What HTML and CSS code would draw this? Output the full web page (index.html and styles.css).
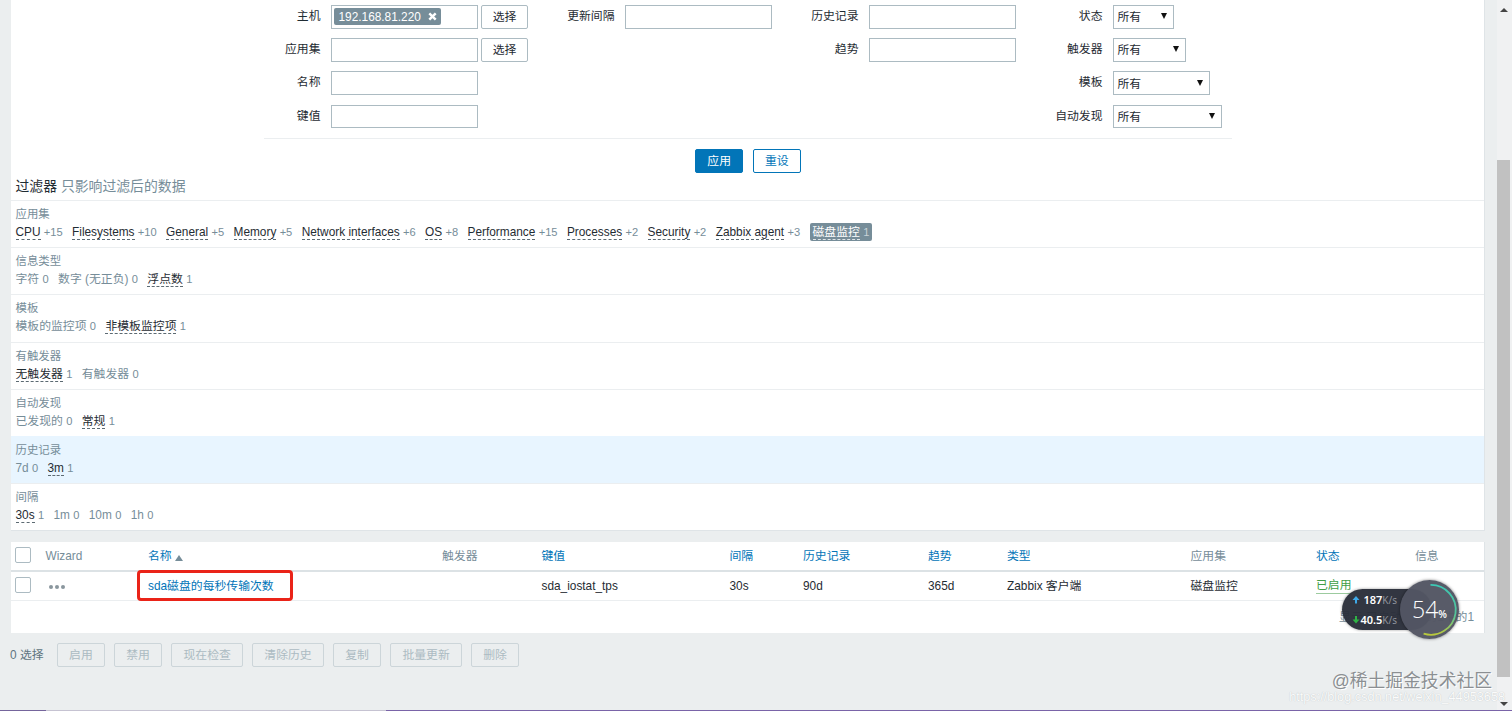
FILE: index.html
```
<!DOCTYPE html>
<html lang="zh-CN">
<head>
    <meta charset="UTF-8">
    <title>监控项的配置</title>
    <link rel="stylesheet" href="styles.css">
</head>
<body>
    <main>
        <section class="filter">
            <form class="filter-form">
                <div class="filter-cols">
                    <div class="col col-first">
                        <div class="row"><label>主机</label><div class="field"><span class="tag">192.168.81.220<svg width="9" height="9" viewBox="0 0 9 9"><path d="M1.3 1.3L7.7 7.7M7.7 1.3L1.3 7.7" stroke="#fff" stroke-width="2.4"/></svg></span></div><button type="button" class="btn btn-grey">选择</button></div>
                        <div class="row"><label>应用集</label><div class="field"></div><button type="button" class="btn btn-grey">选择</button></div>
                        <div class="row"><label>名称</label><div class="field"></div></div>
                        <div class="row"><label>键值</label><div class="field"></div></div>
                    </div>
                    <div class="col">
                        <div class="row"><label>更新间隔</label><div class="field"></div></div>
                    </div>
                    <div class="col">
                        <div class="row"><label>历史记录</label><div class="field"></div></div>
                        <div class="row"><label>趋势</label><div class="field"></div></div>
                    </div>
                    <div class="col">
                        <div class="row"><label>状态</label><div class="select w-status">所有<i></i></div></div>
                        <div class="row"><label>触发器</label><div class="select w-trigger">所有<i></i></div></div>
                        <div class="row"><label>模板</label><div class="select w-template">所有<i></i></div></div>
                        <div class="row"><label>自动发现</label><div class="select w-discovery">所有<i></i></div></div>
                    </div>
                </div>
                <div class="filter-buttons">
                    <button type="button" class="btn btn-main">应用</button>
                    <button type="button" class="btn btn-alt">重设</button>
                </div>
            </form>

            <h4>过滤器 <span>只影响过滤后的数据</span></h4>
            <div class="sub">
                <h3>应用集</h3>
                <p><span><a>CPU</a> <sup>+15</sup></span><span><a>Filesystems</a> <sup>+10</sup></span><span><a>General</a> <sup>+5</sup></span><span><a>Memory</a> <sup>+5</sup></span><span><a>Network interfaces</a> <sup>+6</sup></span><span><a>OS</a> <sup>+8</sup></span><span><a>Performance</a> <sup>+15</sup></span><span><a>Processes</a> <sup>+2</sup></span><span><a>Security</a> <sup>+2</sup></span><span><a>Zabbix agent</a> <sup>+3</sup></span><span class="enabled"><a>磁盘监控</a> <sup>1</sup></span></p>
            </div>
            <div class="sub">
                <h3>信息类型</h3>
                <p><span>字符 <sup>0</sup></span><span>数字 (无正负) <sup>0</sup></span><span><a>浮点数</a> <sup>1</sup></span></p>
            </div>
            <div class="sub">
                <h3>模板</h3>
                <p><span>模板的监控项 <sup>0</sup></span><span><a>非模板监控项</a> <sup>1</sup></span></p>
            </div>
            <div class="sub">
                <h3>有触发器</h3>
                <p><span><a>无触发器</a> <sup>1</sup></span><span>有触发器 <sup>0</sup></span></p>
            </div>
            <div class="sub">
                <h3>自动发现</h3>
                <p><span>已发现的 <sup>0</sup></span><span><a>常规</a> <sup>1</sup></span></p>
            </div>
            <div class="sub hover">
                <h3>历史记录</h3>
                <p><span>7d <sup>0</sup></span><span><a>3m</a> <sup>1</sup></span></p>
            </div>
            <div class="sub">
                <h3>间隔</h3>
                <p><span><a>30s</a> <sup>1</sup></span><span>1m <sup>0</sup></span><span>10m <sup>0</sup></span><span>1h <sup>0</sup></span></p>
            </div>
        </section>

        <table class="list">
            <colgroup>
                <col class="c-check"><col class="c-wizard"><col class="c-name"><col class="c-trig"><col class="c-key"><col class="c-int">
                <col class="c-hist"><col class="c-trend"><col class="c-type"><col class="c-app"><col class="c-status"><col class="c-info">
            </colgroup>
            <thead>
                <tr>
                    <th><span class="check"></span></th>
                    <th>Wizard</th>
                    <th><a>名称</a><i class="sort"></i></th>
                    <th>触发器</th>
                    <th><a>键值</a></th>
                    <th><a>间隔</a></th>
                    <th><a>历史记录</a></th>
                    <th><a>趋势</a></th>
                    <th><a>类型</a></th>
                    <th>应用集</th>
                    <th><a>状态</a></th>
                    <th>信息</th>
                </tr>
            </thead>
            <tbody>
                <tr>
                    <td><span class="check"></span></td>
                    <td><span class="dots"><i></i><i></i><i></i></span></td>
                    <td class="marked"><a>sda磁盘的每秒传输次数</a></td>
                    <td></td>
                    <td>sda_iostat_tps</td>
                    <td>30s</td>
                    <td>90d</td>
                    <td>365d</td>
                    <td>Zabbix 客户端</td>
                    <td>磁盘监控</td>
                    <td><a class="green">已启用</a></td>
                    <td></td>
                </tr>
            </tbody>
            <tfoot>
                <tr><td colspan="12">显示 已自动发现的1中的1</td></tr>
            </tfoot>
        </table>

        <div class="actions">
            <span>0 选择</span>
            <button type="button" class="btn" disabled>启用</button>
            <button type="button" class="btn" disabled>禁用</button>
            <button type="button" class="btn" disabled>现在检查</button>
            <button type="button" class="btn" disabled>清除历史</button>
            <button type="button" class="btn" disabled>复制</button>
            <button type="button" class="btn" disabled>批量更新</button>
            <button type="button" class="btn" disabled>删除</button>
        </div>
    </main>

    <div class="scrollbar"><i class="up"></i><div class="thumb"></div><i class="down"></i></div>

    <!-- network speed widget -->
    <div class="speed">
        <div class="rates">
            <div><svg width="8" height="8" viewBox="0 0 8 8"><path d="M4 0L7.5 4H5V7.5H3V4H.5Z" fill="#3fa9e8"/></svg><b>187</b><small>K/s</small></div>
            <div><svg width="8" height="8" viewBox="0 0 8 8"><path d="M4 7.5L.5 3.5H3V0H5V3.5H7.5Z" fill="#2fb344"/></svg><b>40.5</b><small>K/s</small></div>
        </div>
        <div class="ball">
            <svg width="59" height="59" viewBox="0 0 60 60">
                <defs>
                    <linearGradient id="ring" x1="0" y1="0" x2="0" y2="1">
                        <stop offset="0" stop-color="#3cc8b4"/>
                        <stop offset=".6" stop-color="#55c49a"/>
                        <stop offset="1" stop-color="#b9c83c"/>
                    </linearGradient>
                </defs>
                <path d="M31 5A25.3 25.3 0 1 1 24 54.5" fill="none" stroke="url(#ring)" stroke-width="1.8"/>
            </svg>
            <span>54<small>%</small></span>
        </div>
    </div>

    <div class="mark-url">https://blog.csdn.net/weixin_44953658</div>
    <div class="mark">@稀土掘金技术社区</div>
    <div class="taskbar"><i class="left"></i><i class="right"></i></div>
</body>
</html>
```

FILE: styles.css
```
* {
    box-sizing: border-box;
}
body {
    margin: 0;
    height: 711px;
    overflow: hidden;
    position: relative;
    background: #ebeeef;
    color: #1f2c33;
    font-family: "Liberation Sans", Arial, "Noto Sans CJK SC", sans-serif;
    font-size: 11.85px;
    line-height: 16px;
}
main {
    width: 1474px;
    margin-left: 11px;
}
i {
    font-style: normal;
}

/* Filter */
.filter {
    height: 531px;
    background: #fff;
    border-bottom: 1px solid #dfe4e7;
    border-right: 1px solid #dfe4e7;
}
.filter-form {
    width: 968px;
    margin-left: 253px;
    height: 173px;
}
.filter-cols {
    display: flex;
    height: 139px;
    padding-top: 5px;
    border-bottom: 1px solid #ebeef0;
}
.col {
    display: flex;
    flex-direction: column;
    gap: 9.6px;
}
.row {
    display: flex;
    height: 23.6px;
}
.row label {
    width: 86.5px;
    margin-right: 10px;
    text-align: right;
    line-height: 23px;
}
.col-first .row label {
    width: 56.5px;
}
.field {
    width: 147.5px;
    border: 1px solid #acbbc2;
    padding: 2px;
    display: flex;
}
.tag {
    display: flex;
    align-items: center;
    gap: 7px;
    width: 107px;
    height: 17px;
    padding-left: 5px;
    background: #768d99;
    border-radius: 2px;
    color: #fff;
}
.btn {
    height: 24px;
    padding: 0 11px;
    border: 1px solid #0275b8;
    border-radius: 2px;
    font: inherit;
    line-height: 22px;
    white-space: nowrap;
}
.btn-grey {
    width: 47px;
    height: 23.6px;
    margin-left: 3px;
    padding: 0;
    background: #fff;
    border-color: #acbbc2;
    color: #1f2c33;
}
.select {
    display: flex;
    align-items: center;
    justify-content: space-between;
    padding: 1px 6px 0 4px;
    border: 1px solid #acbbc2;
}
.select i {
    border: 3px solid transparent;
    border-top: 6px solid #111;
    border-bottom: 0;
    margin-bottom: 2px;
}
.w-status { width: 61.5px; }
.w-trigger { width: 73.5px; }
.w-template { width: 97px; }
.w-discovery { width: 109px; }

.filter-buttons {
    display: flex;
    justify-content: center;
    gap: 10px;
    padding-top: 10px;
}
.btn-main {
    background: #0275b8;
    color: #fff;
}
.btn-alt {
    background: #fff;
    color: #0275b8;
}

h4 {
    margin: 0;
    padding: 4px 0 0 4.5px;
    height: 27px;
    font-size: 13.85px;
    font-weight: normal;
    line-height: 18px;
}
h4 span {
    color: #768d99;
}
.sub {
    height: 47.2px;
    padding: 5px 4.5px 0;
    border-top: 1px solid #ebeef0;
    color: #768d99;
}
.sub h3 {
    margin: 0;
    font-size: 11.4px;
    font-weight: normal;
    line-height: 16px;
}
.sub p {
    display: flex;
    gap: 9.4px;
    margin: 0;
    padding-top: 2px;
    line-height: 16px;
}
.sub a {
    color: #1f2c33;
    border-bottom: 1px dashed #5c6a72;
    display: inline-block;
    line-height: 14px;
}
.sub sup {
    font-size: 11.1px;
    vertical-align: baseline;
    line-height: 0;
}
.sub .enabled {
    margin-top: -1px;
    height: 18px;
    padding: 1px 3px;
    background: #768d99;
    border-radius: 2px;
    color: #c8d2d7;
}
.sub .enabled a {
    color: #fff;
    border-color: #e0e6e9;
}
.hover {
    background: #e8f5ff;
    border-color: #e8f5ff;
}

/* Items table */
.list {
    width: 1474px;
    margin-top: 10.5px;
    table-layout: fixed;
    border-collapse: separate;
    border-spacing: 0;
    background: #fff;
    border-right: 1px solid #dfe4e7;
}
.c-check { width: 29.5px; }
.c-wizard { width: 102.5px; }
.c-name { width: 294px; }
.c-trig { width: 99.5px; }
.c-key { width: 188px; }
.c-int { width: 73.5px; }
.c-hist { width: 125px; }
.c-trend { width: 79px; }
.c-type { width: 183.5px; }
.c-app { width: 125.5px; }
.c-status { width: 99px; }
.c-info { width: 74px; }
.list th,
.list td {
    padding: 0 0 0 5px;
    text-align: left;
    font-weight: normal;
    white-space: nowrap;
}
.list th {
    height: 30px;
    color: #768d99;
    border-bottom: 2px solid #dce2e5;
}
.list td {
    height: 29px;
    border-bottom: 1px solid #ebeef0;
}
.list a {
    color: #0275b8;
}
.list a.green {
    margin-top: 1px;
    color: #429e47;
    display: inline-block;
    line-height: 15px;
    border-bottom: 1px solid #9ccb9f;
}
.list tfoot td {
    height: 32px;
    padding-right: 10px;
    text-align: right;
    color: #768d99;
    border: 0;
}
.check {
    display: block;
    width: 16px;
    height: 16px;
    margin: 0 0 2px -.6px;
    border: 1px solid #acbbc2;
    border-radius: 2px;
    background: #fff;
}
.sort {
    display: inline-block;
    margin-left: 3px;
    border: 4px solid transparent;
    border-bottom: 6px solid #768d99;
    border-top: 0;
    vertical-align: -1px;
}
.dots {
    display: flex;
    gap: 2px;
    padding: 3px 0 0 3px;
}
.dots i {
    width: 4px;
    height: 4px;
    border-radius: 50%;
    background: #8a969d;
}
.marked {
    position: relative;
}
.marked::after {
    content: "";
    position: absolute;
    left: -6px;
    top: -2px;
    width: 150px;
    height: 25px;
    border: 2.5px solid #ea2318;
    border-width: 3px;
    border-radius: 4px;
}

.actions {
    display: flex;
    align-items: center;
    gap: 9.5px;
    margin: 10px 0 0 -1px;
    color: #5f7581;
}
.actions span {
    margin-right: 4px;
}
.actions .btn {
    background: transparent;
    border-color: #ccd5d9;
    color: #acbbc2;
}

/* Page scrollbar */
.scrollbar {
    position: absolute;
    top: 0;
    right: 0;
    width: 15px;
    height: 711px;
    padding: 8px 0 5px;
    display: flex;
    flex-direction: column;
    align-items: center;
    background: #f0f1f2;
}
.thumb {
    width: 13px;
    height: 517px;
    margin: 148px 2px 0 0;
    align-self: flex-end;
    background: #c1c1c1;
}
.up,
.down {
    margin-right: 2px;
    border: 4px solid transparent;
}
.up {
    border-top: 0;
    border-bottom-color: #444;
}
.down {
    margin-top: auto;
    border-bottom: 0;
    border-top-color: #444;
}

/* Speed widget */
.speed {
    position: absolute;
    left: 1341px;
    top: 579px;
    width: 120px;
    height: 60px;
}
.rates {
    position: absolute;
    left: 1px;
    top: 10px;
    width: 90px;
    height: 41px;
    padding: 1px 0 0 10px;
    border-radius: 21px;
    background: rgba(42, 46, 57, .96);
    box-shadow: 0 0 3px rgba(0, 0, 0, .4);
    color: #fff;
    font-family: "Noto Sans", sans-serif;
    font-size: 11px;
}
.rates div {
    width: 45px;
    height: 20px;
    display: flex;
    align-items: center;
    justify-content: flex-end;
}
.rates svg {
    flex: none;
    margin-right: auto;
}
.rates b {
    font-weight: 600;
}
.rates small {
    font-size: 10px;
    color: #8e929b;
}
.ball {
    position: absolute;
    left: 59px;
    top: 1px;
    width: 59px;
    height: 59px;
    border-radius: 50%;
    background: rgba(83, 86, 99, .97);
    box-shadow: 0 0 3px rgba(0, 0, 0, .5);
    color: #fff;
}
.ball svg {
    position: absolute;
    left: 0;
    top: 0;
}
.ball span {
    display: block;
    padding-left: 12px;
    font: 300 23px/59px "Open Sans", "Noto Sans", sans-serif;
    white-space: nowrap;
}
.ball small {
    font-size: 10px;
    font-weight: 600;
}

/* Watermarks */
.mark {
    position: absolute;
    right: 20px;
    top: 668px;
    font-size: 17.8px;
    line-height: 26px;
    color: #8b8f92;
    text-shadow: 1px 1px 0 #fff;
    white-space: nowrap;
}
.mark-url {
    position: absolute;
    right: 7px;
    top: 688px;
    font-size: 12.7px;
    line-height: 18px;
    color: #fafbfb;
    text-shadow: 0 0 1px #b4b8bb;
    white-space: nowrap;
}

.taskbar {
    position: absolute;
    left: 0;
    bottom: 0;
    width: 100%;
    height: 1px;
    display: flex;
    justify-content: space-between;
    background: #c6c3d2;
}
.left {
    width: 46px;
    background: #75659c;
}
.right {
    width: 1126px;
    background: #7a64a8;
}
```
